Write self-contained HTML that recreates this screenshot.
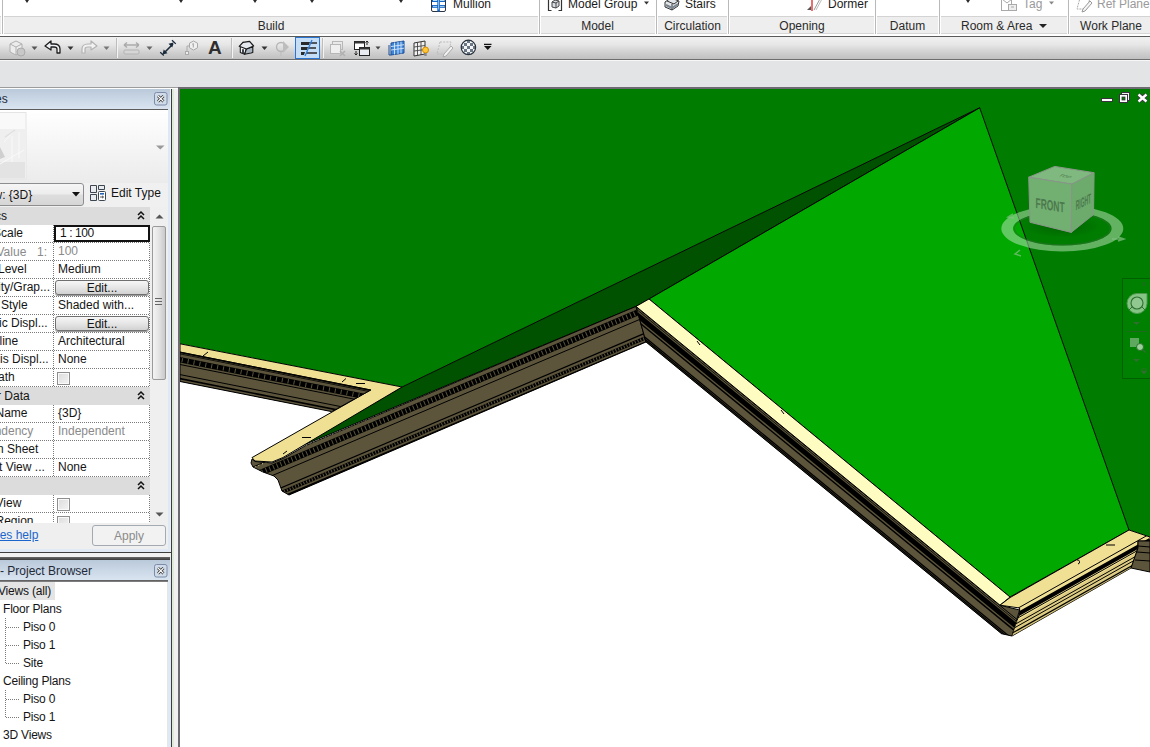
<!DOCTYPE html>
<html><head><meta charset="utf-8">
<style>
*{margin:0;padding:0;box-sizing:border-box}
html,body{width:1150px;height:747px;overflow:hidden;background:#e3e4e6;font-family:"Liberation Sans",sans-serif;font-size:12px;color:#1b1b1b}
.a{position:absolute}
.t{position:absolute;white-space:nowrap;line-height:14px}
svg{overflow:visible}
</style></head><body>
<div class="a" style="left:0;top:0;width:1150px;height:36px;background:#fff"></div>
<div class="a" style="left:-8px;top:16px;width:9px;height:18px;background:#eeeeee;border-top:1px solid #d3d3d3;border-bottom:1px solid #d6d6d6"></div>
<div class="a" style="left:4px;top:16px;width:534px;height:18px;background:#eeeeee;border-top:1px solid #d3d3d3;border-bottom:1px solid #d6d6d6"></div>
<div class="a" style="left:541px;top:16px;width:114px;height:18px;background:#eeeeee;border-top:1px solid #d3d3d3;border-bottom:1px solid #d6d6d6"></div>
<div class="a" style="left:658px;top:16px;width:69px;height:18px;background:#eeeeee;border-top:1px solid #d3d3d3;border-bottom:1px solid #d6d6d6"></div>
<div class="a" style="left:730px;top:16px;width:144px;height:18px;background:#eeeeee;border-top:1px solid #d3d3d3;border-bottom:1px solid #d6d6d6"></div>
<div class="a" style="left:877px;top:16px;width:61px;height:18px;background:#eeeeee;border-top:1px solid #d3d3d3;border-bottom:1px solid #d6d6d6"></div>
<div class="a" style="left:941px;top:16px;width:126px;height:18px;background:#eeeeee;border-top:1px solid #d3d3d3;border-bottom:1px solid #d6d6d6"></div>
<div class="a" style="left:1070px;top:16px;width:89px;height:18px;background:#eeeeee;border-top:1px solid #d3d3d3;border-bottom:1px solid #d6d6d6"></div>
<div class="a" style="left:2px;top:0;width:1px;height:34px;background:#b9b9b9"></div>
<div class="a" style="left:539px;top:0;width:1px;height:34px;background:#b9b9b9"></div>
<div class="a" style="left:656px;top:0;width:1px;height:34px;background:#b9b9b9"></div>
<div class="a" style="left:728px;top:0;width:1px;height:34px;background:#b9b9b9"></div>
<div class="a" style="left:875px;top:0;width:1px;height:34px;background:#b9b9b9"></div>
<div class="a" style="left:939px;top:0;width:1px;height:34px;background:#b9b9b9"></div>
<div class="a" style="left:1068px;top:0;width:1px;height:34px;background:#b9b9b9"></div>
<div class="a" style="left:0;top:36px;width:1150px;height:1px;background:#5a5a5a"></div>
<div class="t" style="left:211px;width:120px;text-align:center;top:19px;color:#2a2a2a">Build</div>
<div class="t" style="left:537.5px;width:120px;text-align:center;top:19px;color:#2a2a2a">Model</div>
<div class="t" style="left:632.5px;width:120px;text-align:center;top:19px;color:#2a2a2a">Circulation</div>
<div class="t" style="left:742px;width:120px;text-align:center;top:19px;color:#2a2a2a">Opening</div>
<div class="t" style="left:847.5px;width:120px;text-align:center;top:19px;color:#2a2a2a">Datum</div>
<div class="t" style="left:1051px;width:120px;text-align:center;top:19px;color:#2a2a2a">Work Plane</div>
<div class="t" style="left:961px;top:19px;color:#2a2a2a">Room &amp; Area</div>
<svg class="a" style="left:1038px;top:22px" width="10" height="8"><path d="M1 2h8l-4 4z" fill="#222"/></svg>
<svg class="a" style="left:23px;top:-3px" width="9" height="7"><path d="M0 0h8l-4 6z" fill="#2a2a2a"/></svg>
<svg class="a" style="left:177px;top:-3px" width="9" height="7"><path d="M0 0h8l-4 6z" fill="#2a2a2a"/></svg>
<svg class="a" style="left:251px;top:-3px" width="9" height="7"><path d="M0 0h8l-4 6z" fill="#2a2a2a"/></svg>
<svg class="a" style="left:308px;top:-3px" width="9" height="7"><path d="M0 0h8l-4 6z" fill="#2a2a2a"/></svg>
<svg class="a" style="left:397px;top:-3px" width="9" height="7"><path d="M0 0h8l-4 6z" fill="#2a2a2a"/></svg>
<svg class="a" style="left:964px;top:-3px" width="9" height="7"><path d="M0 0h8l-4 6z" fill="#2a2a2a"/></svg>
<svg class="a" style="left:430px;top:-4px" width="18" height="17"><rect x="1.5" y="0.5" width="14" height="15" rx="1.5" fill="#fff" stroke="#2d3440"/>
    <rect x="2" y="0" width="13" height="6" fill="#1463c6"/><rect x="3" y="1" width="4.5" height="4" fill="#b5def0"/><rect x="10" y="1" width="4.5" height="4" fill="#b5def0"/>
    <rect x="2" y="9" width="13" height="2.8" fill="#1463c6"/><rect x="3" y="9.9" width="4.5" height="1" fill="#a8d4ec"/><rect x="10" y="9.9" width="4.5" height="1" fill="#a8d4ec"/>
    <rect x="7.3" y="0" width="2.6" height="15.5" fill="#1463c6"/><rect x="8.3" y="0" width="0.8" height="13.5" fill="#b5def0"/></svg>
<div class="t" style="left:453px;top:-3px">Mullion</div>
<svg class="a" style="left:546px;top:-4px" width="18" height="16"><path d="M2.5 3v11.5h3M15.5 3v11.5h-3" fill="none" stroke="#333" stroke-width="1.2"/><path d="M6 6l3-2 4 1v5l-3 2-4-1z" fill="#d9dde3" stroke="#444"/><path d="M6 6l4 1 3-2M10 7v5" fill="none" stroke="#444"/></svg>
<div class="t" style="left:568px;top:-3px">Model Group</div>
<svg class="a" style="left:644px;top:1px" width="6" height="5"><path d="M0 0.5h5l-2.5 3z" fill="#333"/></svg>
<svg class="a" style="left:664px;top:-4px" width="16" height="15"><path d="M1 6l6-4 8 3-1 5-6 4-7-3z" fill="#e3e6ea" stroke="#333"/><path d="M3 5l7 3 4-3M8 8l0 6" stroke="#333" fill="none"/><path d="M2 9l6 3 6-4" stroke="#7a8590" fill="none" stroke-width="2"/></svg>
<div class="t" style="left:685px;top:-3px">Stairs</div>
<svg class="a" style="left:806px;top:-4px" width="16" height="16"><path d="M8 14L15 1" stroke="#999" stroke-width="1"/><path d="M10 14L16 3" stroke="#bbb" stroke-width="1"/><path d="M6 0v15" stroke="#d22" stroke-width="1.3"/><path d="M1 14l4-4v4z" fill="#555"/></svg>
<div class="t" style="left:828px;top:-3px">Dormer</div>
<svg class="a" style="left:1000px;top:-4px" width="18" height="16"><rect x="1.5" y="1.5" width="10" height="13" fill="none" stroke="#a9a9a9"/><path d="M2 3l5 4 5-4" fill="none" stroke="#a9a9a9"/><rect x="8.5" y="8.5" width="8" height="6" fill="#eee" stroke="#a9a9a9"/><path d="M11 11h3" stroke="#a9a9a9"/></svg>
<div class="t" style="left:1023px;top:-3px;color:#9a9a9a">Tag</div>
<svg class="a" style="left:1049px;top:1px" width="6" height="5"><path d="M0 0.5h5l-2.5 3z" fill="#888"/></svg>
<svg class="a" style="left:1076px;top:-4px" width="17" height="16"><path d="M4 2h10l-3 11H1z" fill="none" stroke="#aaa" stroke-dasharray="2 1"/><path d="M7 13l7-8 2 2-7 8-3 1z" fill="#f5f5f5" stroke="#999"/></svg>
<div class="t" style="left:1097px;top:-3px;color:#9a9a9a">Ref Plane</div>
<div class="a" style="left:0;top:37px;width:1150px;height:22px;background:linear-gradient(#f1f1f1,#e6e6e6 35%,#d0d0d0 70%,#c0c0c0)"></div>
<div class="a" style="left:0;top:59px;width:1150px;height:1px;background:#6e6e6e"></div>
<div class="a" style="left:0;top:60px;width:1150px;height:1px;background:#f7f7f7"></div>
<div class="a" style="left:0;top:87px;width:1150px;height:1px;background:#9c9c9c"></div>
<div class="a" style="left:0;top:88px;width:178px;height:1px;background:#fdfdfd"></div>
<svg class="a" style="left:8px;top:39px" width="18" height="18"><path d="M2 5l6-3 6 3v8l-6 3-6-3z" fill="#ececec" stroke="#b0b0b0"/><path d="M2 5l6 3 6-3M8 8v8" fill="none" stroke="#b0b0b0"/><circle cx="13" cy="13" r="4" fill="#c8c8c8" stroke="#aaa"/></svg>
<svg class="a" style="left:31px;top:46px" width="7" height="5"><path d="M0.5 0.5h6l-3 3.5z" fill="#555"/></svg>
<svg class="a" style="left:44px;top:40px" width="18" height="15"><path d="M1 6L7 1v3h3c4 0 6 2 6 5v4h-3V9c0-1.5-1-2-3-2H7v3z" fill="#eef2f6" stroke="#1e1e1e" stroke-width="1.3" stroke-linejoin="round"/></svg>
<svg class="a" style="left:67px;top:46px" width="7" height="5"><path d="M0.5 0.5h6l-3 3.5z" fill="#333"/></svg>
<svg class="a" style="left:80px;top:40px" width="18" height="15"><path d="M17 6L11 1v3H8C4 4 2 6 2 9v4h3V9c0-1.5 1-2 3-2h3v3z" fill="#f2f2f2" stroke="#b3b3b3" stroke-width="1.2" stroke-linejoin="round"/></svg>
<svg class="a" style="left:103px;top:46px" width="7" height="5"><path d="M0.5 0.5h6l-3 3.5z" fill="#777"/></svg>
<div class="a" style="left:116px;top:38px;width:1px;height:20px;background:#bdbdbd"></div><div class="a" style="left:117px;top:38px;width:1px;height:20px;background:#f4f4f4"></div>
<svg class="a" style="left:123px;top:42px" width="17" height="13"><path d="M1 3h15M1 3l3-2.5M1 3l3 2.5M16 3l-3-2.5M16 3l-3 2.5" stroke="#aaa" stroke-width="1.4" fill="none"/><rect x="1" y="8" width="15" height="4" rx="1" fill="#d6d6d6" stroke="#b3b3b3"/></svg>
<svg class="a" style="left:146px;top:46px" width="7" height="5"><path d="M0.5 0.5h6l-3 3.5z" fill="#666"/></svg>
<svg class="a" style="left:158px;top:38px" width="20" height="20"><path d="M6 15L15 6" stroke="#1a2a3a" stroke-width="1.6"/><path d="M2.2 14.3l3.6 3.1M14 2.3l3.8 3.6" stroke="#1a2a3a" stroke-width="1.3"/><path d="M4.5 16.5l1.2-5 3.8 3.8z M15.5 4.5l-1.2 5-3.8-3.8z" fill="#1a2a3a"/></svg>
<svg class="a" style="left:184px;top:40px" width="17" height="15"><path d="M9.5 1l4 2.2v4.6l-4 2.2-4-2.2V3.2z" fill="#f0f0f0" stroke="#a8a8a8"/><path d="M9.3 3.5v4M8.3 4.3l1-0.8" stroke="#999" stroke-width="0.9" fill="none"/><path d="M5.5 6H3v6" fill="none" stroke="#aaa"/><rect x="1.5" y="11.5" width="3" height="3" fill="#eee" stroke="#aaa"/></svg>
<div class="t" style="left:208px;top:38px;font-size:19px;line-height:20px;font-weight:bold;color:#2e2e2e">A</div>
<div class="a" style="left:231px;top:38px;width:1px;height:20px;background:#bdbdbd"></div><div class="a" style="left:232px;top:38px;width:1px;height:20px;background:#f4f4f4"></div>
<svg class="a" style="left:236px;top:38px" width="22" height="20"><path d="M4.3 8.3L7 4.3 9.5 8.5 10.4 11 8.6 16.3 4.3 14.4z" fill="#f4f6f8" stroke="#1a1a1a" stroke-width="1.1" stroke-linejoin="round"/><path d="M10.4 11L16.8 8.8V14.5L15 15 8.6 16.3z" fill="#a9b3be" stroke="#1a1a1a" stroke-width="1.1" stroke-linejoin="round"/><path d="M3.2 8.3L7 4.3 13.6 3.3 17.6 8 10.4 11z" fill="#e6eaee" stroke="#1a1a1a" stroke-width="1.2" stroke-linejoin="round"/><path d="M6.1 16V11.5a1 1 0 0 1 1.8 0V16z" fill="#2a2f36"/></svg>
<svg class="a" style="left:261px;top:46px" width="7" height="5"><path d="M0.5 0.5h6l-3 3.5z" fill="#333"/></svg>
<svg class="a" style="left:275px;top:40px" width="15" height="16"><circle cx="6" cy="7" r="4.5" fill="none" stroke="#b5b5b5" stroke-width="1.3"/><path d="M8 1l6 6-6 6z" fill="#bdbdbd"/><path d="M6 12v4" stroke="#bbb"/></svg>
<div class="a" style="left:295px;top:37px;width:25px;height:22px;background:#c5def6;border:1.5px solid #2a74d4"></div>
    <svg class="a" style="left:295px;top:37px" width="25" height="22"><path d="M6 5h9l-1 3H6zM6 10h7l-1 3H6zM6 15h4l-1 3H6z" fill="#2a2a2a"/><path d="M15 6h7M13 11h8M11 16h11" stroke="#2a2a2a" stroke-width="1.6"/><path d="M17 3L10 19" stroke="#2b7be0" stroke-width="1.3"/></svg>
<div class="a" style="left:322px;top:38px;width:1px;height:20px;background:#bdbdbd"></div><div class="a" style="left:323px;top:38px;width:1px;height:20px;background:#f4f4f4"></div>
<svg class="a" style="left:329px;top:40px" width="18" height="17"><rect x="3.5" y="1.5" width="10" height="8" fill="none" stroke="#b7b7b7"/><rect x="1.5" y="4.5" width="10" height="9" fill="#efefef" stroke="#b7b7b7"/><path d="M11 11l5 5M16 11l-5 5" stroke="#b0b0b0" stroke-width="1.5"/></svg>
<svg class="a" style="left:353px;top:40px" width="18" height="17"><rect x="1.5" y="1.5" width="10" height="8" fill="#fff" stroke="#222"/><rect x="1.5" y="1.5" width="10" height="2" fill="#333"/><rect x="6.5" y="7.5" width="10" height="8" fill="#e8ecf0" stroke="#222"/><rect x="6.5" y="7.5" width="10" height="2" fill="#333"/><path d="M14 1v4M12.5 2.5L14 1l1.5 1.5M3 11v4M1.5 13.5L3 15l1.5-1.5" stroke="#222" fill="none"/></svg>
<svg class="a" style="left:375px;top:46px" width="6" height="5"><path d="M0.5 0.5h5l-2.5 3z" fill="#444"/></svg>
<svg class="a" style="left:388px;top:40px" width="17" height="16"><path d="M3 3l13-2v12L3 15z" fill="#3f86d8" stroke="#1c4f95"/><path d="M6.5 2.5v12M10 2v12M13 1.5v12M3 6.5l13-1.8M3 10l13-1.8" stroke="#d8e8fa" stroke-width="0.9"/><path d="M1 5v10h2" stroke="#1c4f95" fill="none"/></svg>
<svg class="a" style="left:412px;top:40px" width="18" height="17"><path d="M2 3l11-2v13L2 16z" fill="#f2f2f2" stroke="#333"/><path d="M5.5 2.5v13M9 2v13M2 7l11-1.5M2 11l11-1.5" stroke="#444" stroke-width="0.9"/><circle cx="13.5" cy="10" r="3" fill="#ffc83a" stroke="#d48a00"/><rect x="12.3" y="13" width="2.4" height="3" fill="#888"/></svg>
<svg class="a" style="left:436px;top:40px" width="18" height="16"><path d="M4 2h11l-3 12H1z" fill="none" stroke="#bbb" stroke-dasharray="2 1.2"/><path d="M8 14l7-8 2 2-7 8-3 1z" fill="#f2f2f2" stroke="#aaa"/></svg>
<svg class="a" style="left:460px;top:39px" width="17" height="17"><defs><pattern id="chk" x="1" y="1" width="6" height="6" patternUnits="userSpaceOnUse"><rect width="6" height="6" fill="#f4f6f8"/><rect width="3" height="3" fill="#6b7785"/><rect x="3" y="3" width="3" height="3" fill="#6b7785"/></pattern></defs><circle cx="8.4" cy="8.4" r="7.2" fill="url(#chk)" stroke="#28323c" stroke-width="1.2"/></svg>
<svg class="a" style="left:483px;top:43px" width="10" height="9"><path d="M1 1.4h7.5" stroke="#111" stroke-width="1.3"/><path d="M1 3h7.5l-3.75 4z" fill="#111"/></svg>
<div class="a" style="left:167px;top:89px;width:1px;height:658px;background:#e6e6e6"></div>
<div class="a" style="left:168px;top:89px;width:3px;height:658px;background:#dfe8f5"></div>
<div class="a" style="left:171px;top:89px;width:1px;height:658px;background:#3c3c3c"></div>
<div class="a" style="left:172px;top:89px;width:2px;height:658px;background:#dfe9d7"></div>
<div class="a" style="left:174px;top:89px;width:4px;height:658px;background:#f0f0f0"></div>
<div class="a" style="left:178px;top:87px;width:2px;height:660px;background:#6d6a72"></div>
<div class="a" style="left:0;top:89px;width:170px;height:20px;background:linear-gradient(#bac9da,#d9e4f0)"></div>
<div class="a" style="left:170px;top:89px;width:1px;height:463px;background:#eaf0f8"></div>
<div class="t" style="left:-5px;top:92px;color:#1e2a38;font-size:12px">es</div>
<svg class="a" style="left:154px;top:92px" width="14" height="14"><rect x="0.5" y="0.5" width="12.5" height="12.5" rx="2" fill="#cfdbe8" stroke="#7d8ba8"/><path d="M4 4l5.5 5.5M9.5 4L4 9.5" stroke="#2a2a2a" stroke-width="2.6"/><path d="M4 4l5.5 5.5M9.5 4L4 9.5" stroke="#fff" stroke-width="1.1"/></svg>
<div class="a" style="left:0;top:109px;width:168px;height:1px;background:#5c5c5c"></div>
<div class="a" style="left:0;top:110px;width:168px;height:73px;background:linear-gradient(#ffffff,#f3f3f3 60%,#ebebeb)"></div>
<svg class="a" style="left:0;top:112px" width="28" height="68"><rect x="-2" y="0.5" width="28" height="66.5" fill="#f9f9f9" stroke="#e4e4e4"/><rect x="-1" y="17" width="26" height="33" fill="#efefef"/><rect x="-1" y="50" width="26" height="16.5" fill="#e3e3e3"/><path d="M0 35l0 12 5-2z" fill="#cfcfcf"/><path d="M0 52L24 38M4 30L15 18M12 24v26M19 20v26" stroke="#f9f9f9" stroke-width="1"/><path d="M5 25l10-7" stroke="#e0e0e0" stroke-width="1.5"/></svg>
<svg class="a" style="left:156px;top:145px" width="9" height="5"><path d="M0 0.5h8.5l-4.2 4z" fill="#9a9a9a"/></svg>
<div class="a" style="left:0;top:183px;width:168px;height:24px;background:#f0f0f0"></div>
<div class="a" style="left:-6px;top:183px;width:90px;height:23px;border:1px solid #8d8e8f;border-radius:3px;background:linear-gradient(#f6f6f6,#ececec 48%,#dedede 52%,#d6d6d6)"></div>
<div class="t" style="left:-6.5px;top:188px;color:#141414">w: {3D}</div>
<svg class="a" style="left:72px;top:192px" width="8" height="5"><path d="M0 0h8l-4 4.5z" fill="#111"/></svg>
<svg class="a" style="left:89px;top:184px" width="18" height="18"><path d="M1.5 1.5h6v7h-6zM9.5 1.5h6v4h-6zM1.5 10.5h6v6h-6z" fill="#e9ecef" stroke="#3d4650"/><rect x="9.5" y="7.5" width="7" height="9" rx="1" fill="#fff" stroke="#3d4650"/><rect x="11" y="9" width="4" height="1.6" fill="#2563b6"/><path d="M11 13h3.5M13 11.8l1.5 1.2-1.5 1.2" stroke="#333" stroke-width="0.8" fill="none"/></svg>
<div class="t" style="left:111px;top:186px;color:#141414">Edit Type</div>
<div class="a" style="left:0;top:207px;width:150px;height:316px;background:#fff"></div>
<div class="a" style="left:150px;top:207px;width:18px;height:316px;background:#efefef"></div>
<svg class="a" style="left:155px;top:214px" width="9" height="5"><path d="M0.5 4.5h8l-4-4z" fill="#555"/></svg>
<div class="a" style="left:152px;top:226px;width:14px;height:154px;border:1px solid #9a9a9a;border-radius:2px;background:linear-gradient(90deg,#f4f4f4,#e3e3e3 50%,#c9c9c9)"></div>
<svg class="a" style="left:154px;top:297px" width="9" height="9"><path d="M1 1.5h7M1 4.5h7M1 7.5h7" stroke="#666" stroke-width="1"/></svg>
<svg class="a" style="left:155px;top:512px" width="9" height="5"><path d="M0.5 0.5h8l-4 4z" fill="#555"/></svg>
<div class="a" style="left:0;top:207px;width:150px;height:18px;background:#dcdcdc"></div>
<div class="t" style="left:-5px;top:209px;color:#141414">cs</div>
<svg class="a" style="left:137px;top:211px" width="8" height="9"><path d="M1 4l3-3 3 3M1 8l3-3 3 3" fill="none" stroke="#111" stroke-width="1.5"/></svg>
<div class="a" style="left:53px;top:225px;width:1px;height:18px;background:repeating-linear-gradient(180deg,#7a7a7a 0 1px,transparent 1px 2px)"></div>
<div class="a" style="left:149px;top:225px;width:1px;height:18px;background:repeating-linear-gradient(180deg,#7a7a7a 0 1px,transparent 1px 2px)"></div>
<div class="a" style="left:0px;top:242px;width:149px;height:1px;background:repeating-linear-gradient(90deg,#7a7a7a 0 1px,transparent 1px 2px)"></div>
<div class="t" style="left:-7px;top:226px;color:#141414">Scale</div>
<div class="a" style="left:54px;top:225px;width:96px;height:17px;border:2px solid #111;background:#fff"></div>
<div class="t" style="left:60px;top:226px;color:#141414;letter-spacing:-0.4px">1 : 100</div>
<div class="a" style="left:53px;top:243px;width:1px;height:18px;background:repeating-linear-gradient(180deg,#7a7a7a 0 1px,transparent 1px 2px)"></div>
<div class="a" style="left:149px;top:243px;width:1px;height:18px;background:repeating-linear-gradient(180deg,#7a7a7a 0 1px,transparent 1px 2px)"></div>
<div class="a" style="left:0px;top:260px;width:149px;height:1px;background:repeating-linear-gradient(90deg,#7a7a7a 0 1px,transparent 1px 2px)"></div>
<div class="t" style="left:-3.5px;top:245px;color:#8a8a8a">Value</div><div class="t" style="left:37px;top:245px;color:#8a8a8a">1:</div>
<div class="t" style="left:58px;top:244px;color:#8a8a8a">100</div>
<div class="a" style="left:53px;top:261px;width:1px;height:18px;background:repeating-linear-gradient(180deg,#7a7a7a 0 1px,transparent 1px 2px)"></div>
<div class="a" style="left:149px;top:261px;width:1px;height:18px;background:repeating-linear-gradient(180deg,#7a7a7a 0 1px,transparent 1px 2px)"></div>
<div class="a" style="left:0px;top:278px;width:149px;height:1px;background:repeating-linear-gradient(90deg,#7a7a7a 0 1px,transparent 1px 2px)"></div>
<div class="t" style="left:-2px;top:262px;color:#141414">Level</div>
<div class="t" style="left:58px;top:262px;color:#141414">Medium</div>
<div class="a" style="left:53px;top:279px;width:1px;height:18px;background:repeating-linear-gradient(180deg,#7a7a7a 0 1px,transparent 1px 2px)"></div>
<div class="a" style="left:149px;top:279px;width:1px;height:18px;background:repeating-linear-gradient(180deg,#7a7a7a 0 1px,transparent 1px 2px)"></div>
<div class="a" style="left:0px;top:296px;width:149px;height:1px;background:repeating-linear-gradient(90deg,#7a7a7a 0 1px,transparent 1px 2px)"></div>
<div class="t" style="left:-2px;top:280px;color:#141414">ity/Grap...</div>
<div class="a" style="left:55px;top:280px;width:94px;height:15px;border:1px solid #6f6f6f;border-radius:3px;background:linear-gradient(#f6f6f6,#e6e6e6 50%,#d2d2d2);box-shadow:0 1px 0 #9a9a9a"></div>
<div class="t" style="left:55px;width:94px;text-align:center;top:281px;color:#141414">Edit...</div>
<div class="a" style="left:53px;top:297px;width:1px;height:18px;background:repeating-linear-gradient(180deg,#7a7a7a 0 1px,transparent 1px 2px)"></div>
<div class="a" style="left:149px;top:297px;width:1px;height:18px;background:repeating-linear-gradient(180deg,#7a7a7a 0 1px,transparent 1px 2px)"></div>
<div class="a" style="left:0px;top:314px;width:149px;height:1px;background:repeating-linear-gradient(90deg,#7a7a7a 0 1px,transparent 1px 2px)"></div>
<div class="t" style="left:1px;top:298px;color:#141414">Style</div>
<div class="t" style="left:58px;top:298px;color:#141414">Shaded with...</div>
<div class="a" style="left:53px;top:315px;width:1px;height:18px;background:repeating-linear-gradient(180deg,#7a7a7a 0 1px,transparent 1px 2px)"></div>
<div class="a" style="left:149px;top:315px;width:1px;height:18px;background:repeating-linear-gradient(180deg,#7a7a7a 0 1px,transparent 1px 2px)"></div>
<div class="a" style="left:0px;top:332px;width:149px;height:1px;background:repeating-linear-gradient(90deg,#7a7a7a 0 1px,transparent 1px 2px)"></div>
<div class="t" style="left:-1px;top:316px;color:#141414">ic Displ...</div>
<div class="a" style="left:55px;top:316px;width:94px;height:15px;border:1px solid #6f6f6f;border-radius:3px;background:linear-gradient(#f6f6f6,#e6e6e6 50%,#d2d2d2);box-shadow:0 1px 0 #9a9a9a"></div>
<div class="t" style="left:55px;width:94px;text-align:center;top:317px;color:#141414">Edit...</div>
<div class="a" style="left:53px;top:333px;width:1px;height:18px;background:repeating-linear-gradient(180deg,#7a7a7a 0 1px,transparent 1px 2px)"></div>
<div class="a" style="left:149px;top:333px;width:1px;height:18px;background:repeating-linear-gradient(180deg,#7a7a7a 0 1px,transparent 1px 2px)"></div>
<div class="a" style="left:0px;top:350px;width:149px;height:1px;background:repeating-linear-gradient(90deg,#7a7a7a 0 1px,transparent 1px 2px)"></div>
<div class="t" style="left:-0.5px;top:334px;color:#141414">line</div>
<div class="t" style="left:58px;top:334px;color:#141414">Architectural</div>
<div class="a" style="left:53px;top:351px;width:1px;height:18px;background:repeating-linear-gradient(180deg,#7a7a7a 0 1px,transparent 1px 2px)"></div>
<div class="a" style="left:149px;top:351px;width:1px;height:18px;background:repeating-linear-gradient(180deg,#7a7a7a 0 1px,transparent 1px 2px)"></div>
<div class="a" style="left:0px;top:368px;width:149px;height:1px;background:repeating-linear-gradient(90deg,#7a7a7a 0 1px,transparent 1px 2px)"></div>
<div class="t" style="left:-12px;top:352px;color:#141414">ysis Displ...</div>
<div class="t" style="left:58px;top:352px;color:#141414">None</div>
<div class="a" style="left:53px;top:369px;width:1px;height:18px;background:repeating-linear-gradient(180deg,#7a7a7a 0 1px,transparent 1px 2px)"></div>
<div class="a" style="left:149px;top:369px;width:1px;height:18px;background:repeating-linear-gradient(180deg,#7a7a7a 0 1px,transparent 1px 2px)"></div>
<div class="a" style="left:0px;top:386px;width:149px;height:1px;background:repeating-linear-gradient(90deg,#7a7a7a 0 1px,transparent 1px 2px)"></div>
<div class="t" style="left:-2px;top:370px;color:#141414">ath</div>
<div class="a" style="left:57px;top:372px;width:13px;height:13px;border:1px solid #8e8f8f;background:linear-gradient(135deg,#dcdcdc,#f4f4f4)"></div>
<div class="a" style="left:58px;top:373px;width:11px;height:11px;border:1px solid #fafafa"></div>
<div class="a" style="left:0;top:387px;width:150px;height:18px;background:#dcdcdc"></div>
<div class="t" style="left:-3px;top:389px;color:#141414">r Data</div>
<svg class="a" style="left:137px;top:391px" width="8" height="9"><path d="M1 4l3-3 3 3M1 8l3-3 3 3" fill="none" stroke="#111" stroke-width="1.5"/></svg>
<div class="a" style="left:53px;top:405px;width:1px;height:18px;background:repeating-linear-gradient(180deg,#7a7a7a 0 1px,transparent 1px 2px)"></div>
<div class="a" style="left:149px;top:405px;width:1px;height:18px;background:repeating-linear-gradient(180deg,#7a7a7a 0 1px,transparent 1px 2px)"></div>
<div class="a" style="left:0px;top:422px;width:149px;height:1px;background:repeating-linear-gradient(90deg,#7a7a7a 0 1px,transparent 1px 2px)"></div>
<div class="t" style="left:-4.5px;top:406px;color:#141414">Name</div>
<div class="t" style="left:58px;top:406px;color:#141414">{3D}</div>
<div class="a" style="left:53px;top:423px;width:1px;height:18px;background:repeating-linear-gradient(180deg,#7a7a7a 0 1px,transparent 1px 2px)"></div>
<div class="a" style="left:149px;top:423px;width:1px;height:18px;background:repeating-linear-gradient(180deg,#7a7a7a 0 1px,transparent 1px 2px)"></div>
<div class="a" style="left:0px;top:440px;width:149px;height:1px;background:repeating-linear-gradient(90deg,#7a7a7a 0 1px,transparent 1px 2px)"></div>
<div class="t" style="left:-12px;top:424px;color:#8a8a8a">endency</div>
<div class="t" style="left:58px;top:424px;color:#8a8a8a">Independent</div>
<div class="a" style="left:53px;top:441px;width:1px;height:18px;background:repeating-linear-gradient(180deg,#7a7a7a 0 1px,transparent 1px 2px)"></div>
<div class="a" style="left:149px;top:441px;width:1px;height:18px;background:repeating-linear-gradient(180deg,#7a7a7a 0 1px,transparent 1px 2px)"></div>
<div class="a" style="left:0px;top:458px;width:149px;height:1px;background:repeating-linear-gradient(90deg,#7a7a7a 0 1px,transparent 1px 2px)"></div>
<div class="t" style="left:-3px;top:442px;color:#141414">n Sheet</div>
<div class="a" style="left:53px;top:459px;width:1px;height:18px;background:repeating-linear-gradient(180deg,#7a7a7a 0 1px,transparent 1px 2px)"></div>
<div class="a" style="left:149px;top:459px;width:1px;height:18px;background:repeating-linear-gradient(180deg,#7a7a7a 0 1px,transparent 1px 2px)"></div>
<div class="a" style="left:0px;top:476px;width:149px;height:1px;background:repeating-linear-gradient(90deg,#7a7a7a 0 1px,transparent 1px 2px)"></div>
<div class="t" style="left:-1px;top:460px;color:#141414">t View ...</div>
<div class="t" style="left:58px;top:460px;color:#141414">None</div>
<div class="a" style="left:0;top:477px;width:150px;height:18px;background:#dcdcdc"></div>
<svg class="a" style="left:137px;top:481px" width="8" height="9"><path d="M1 4l3-3 3 3M1 8l3-3 3 3" fill="none" stroke="#111" stroke-width="1.5"/></svg>
<div class="a" style="left:53px;top:495px;width:1px;height:18px;background:repeating-linear-gradient(180deg,#7a7a7a 0 1px,transparent 1px 2px)"></div>
<div class="a" style="left:149px;top:495px;width:1px;height:18px;background:repeating-linear-gradient(180deg,#7a7a7a 0 1px,transparent 1px 2px)"></div>
<div class="a" style="left:0px;top:512px;width:149px;height:1px;background:repeating-linear-gradient(90deg,#7a7a7a 0 1px,transparent 1px 2px)"></div>
<div class="t" style="left:-4.5px;top:496px;color:#141414">View</div>
<div class="a" style="left:57px;top:498px;width:13px;height:13px;border:1px solid #8e8f8f;background:linear-gradient(135deg,#dcdcdc,#f4f4f4)"></div>
<div class="a" style="left:58px;top:499px;width:11px;height:11px;border:1px solid #fafafa"></div>
<div class="a" style="left:53px;top:513px;width:1px;height:18px;background:repeating-linear-gradient(180deg,#7a7a7a 0 1px,transparent 1px 2px)"></div>
<div class="a" style="left:149px;top:513px;width:1px;height:18px;background:repeating-linear-gradient(180deg,#7a7a7a 0 1px,transparent 1px 2px)"></div>
<div class="a" style="left:0px;top:530px;width:149px;height:1px;background:repeating-linear-gradient(90deg,#7a7a7a 0 1px,transparent 1px 2px)"></div>
<div class="t" style="left:-4.5px;top:514px;color:#141414">Region</div>
<div class="a" style="left:57px;top:516px;width:13px;height:13px;border:1px solid #8e8f8f;background:linear-gradient(135deg,#dcdcdc,#f4f4f4)"></div>
<div class="a" style="left:58px;top:517px;width:11px;height:11px;border:1px solid #fafafa"></div>
<div class="a" style="left:0;top:523px;width:168px;height:26px;background:#efefef"></div>
<div class="t" style="left:-3px;top:528px;color:#1a66cc;text-decoration:underline">ies help</div>
<div class="a" style="left:92px;top:525px;width:74px;height:21px;border:1px solid #a3aab2;border-radius:3px;background:#f2f2f2"></div>
<div class="t" style="left:92px;width:74px;text-align:center;top:529px;color:#8b8b8b">Apply</div>
<div class="a" style="left:0;top:549px;width:170px;height:3px;background:#e2eaf5"></div>
<div class="a" style="left:0;top:552px;width:171px;height:1px;background:#3f3f3f"></div>
<div class="a" style="left:0;top:553px;width:171px;height:4px;background:#f2f2f2"></div>
<div class="a" style="left:0;top:557px;width:170px;height:3px;background:linear-gradient(#6a6a6a,#3a3a3a)"></div>
<div class="a" style="left:0;top:560px;width:170px;height:20px;background:linear-gradient(#bac9da,#d9e4f0)"></div>
<div class="t" style="left:0;top:564px;color:#1e2a38;font-size:12px">- Project Browser</div>
<svg class="a" style="left:154px;top:564px" width="14" height="14"><rect x="0.5" y="0.5" width="12.5" height="12.5" rx="2" fill="#cfdbe8" stroke="#7d8ba8"/><path d="M4 4l5.5 5.5M9.5 4L4 9.5" stroke="#2a2a2a" stroke-width="2.6"/><path d="M4 4l5.5 5.5M9.5 4L4 9.5" stroke="#fff" stroke-width="1.1"/></svg>
<div class="a" style="left:0;top:580px;width:168px;height:2px;background:linear-gradient(#555,#8a8a8a)"></div>
<div class="a" style="left:0;top:582px;width:167px;height:165px;background:#fff"></div>
<div class="a" style="left:0;top:582px;width:55px;height:18px;background:#e4e4e4"></div>
<div class="t" style="left:-2px;top:584px;color:#141414;letter-spacing:-0.2px">Views (all)</div>
<div class="t" style="left:3px;top:602px;color:#141414;letter-spacing:-0.2px">Floor Plans</div>
<div class="t" style="left:23px;top:620px;color:#141414;letter-spacing:-0.2px">Piso 0</div>
<div class="t" style="left:23px;top:638px;color:#141414;letter-spacing:-0.2px">Piso 1</div>
<div class="t" style="left:23px;top:656px;color:#141414;letter-spacing:-0.2px">Site</div>
<div class="t" style="left:3px;top:674px;color:#141414;letter-spacing:-0.2px">Ceiling Plans</div>
<div class="t" style="left:23px;top:692px;color:#141414;letter-spacing:-0.2px">Piso 0</div>
<div class="t" style="left:23px;top:710px;color:#141414;letter-spacing:-0.2px">Piso 1</div>
<div class="t" style="left:3px;top:728px;color:#141414;letter-spacing:-0.2px">3D Views</div>
<div class="a" style="left:5px;top:618px;width:1px;height:45px;background:repeating-linear-gradient(180deg,#7a7a7a 0 1px,transparent 1px 2px)"></div>
<div class="a" style="left:5px;top:690px;width:1px;height:27px;background:repeating-linear-gradient(180deg,#7a7a7a 0 1px,transparent 1px 2px)"></div>
<div class="a" style="left:6px;top:627px;width:14px;height:1px;background:repeating-linear-gradient(90deg,#7a7a7a 0 1px,transparent 1px 2px)"></div>
<div class="a" style="left:6px;top:645px;width:14px;height:1px;background:repeating-linear-gradient(90deg,#7a7a7a 0 1px,transparent 1px 2px)"></div>
<div class="a" style="left:6px;top:663px;width:14px;height:1px;background:repeating-linear-gradient(90deg,#7a7a7a 0 1px,transparent 1px 2px)"></div>
<div class="a" style="left:6px;top:699px;width:14px;height:1px;background:repeating-linear-gradient(90deg,#7a7a7a 0 1px,transparent 1px 2px)"></div>
<div class="a" style="left:6px;top:717px;width:14px;height:1px;background:repeating-linear-gradient(90deg,#7a7a7a 0 1px,transparent 1px 2px)"></div>
<svg class="a" style="left:0;top:0" width="1150" height="747" viewBox="0 0 1150 747">
<defs><clipPath id="vp"><rect x="180" y="89" width="970" height="658"/></clipPath>
<clipPath id="cg1"><polygon points="180.0,352.1 370.7,390.0 331.6,411.6 180.0,381.5"/></clipPath>
<clipPath id="cg2"><polygon points="252.0,459.0 255.0,461.5 272.0,463.0 284.0,458.0 305.7,445.5 636.0,306.4 646.0,342.0 289.0,495.0 282.0,491.0 278.0,480.0 274.0,476.0 263.0,472.0 253.0,467.0 251.0,463.0"/></clipPath>
<clipPath id="cg3"><polygon points="636.0,306.4 1000.0,605.2 1019.6,610.0 1012.0,636.0 1001.5,633.7 646.0,342.0"/></clipPath>
</defs>
<rect x="178" y="87" width="972" height="2" fill="#6d6a72"/>
<g clip-path="url(#vp)">
<rect x="180" y="89" width="970" height="658" fill="#fff"/>
<polygon points="180.0,89.0 1150.0,89.0 1150.0,537.0 1129.0,530.0 979.7,107.8 402.0,387.0 180.0,343.8" fill="#007d00"/>
<polygon points="402.0,387.0 979.7,107.8 649.0,299.0 636.0,306.4 305.7,444.2 290.0,452.0" fill="#005200" stroke="#000" stroke-width="1"/>
<polygon points="979.7,107.8 1129.0,530.0 1010.0,597.0 649.0,299.0" fill="#00a800" stroke="#000" stroke-width="1"/>
<polygon points="180.0,343.8 402.0,387.0 283.0,457.5 272.0,462.0 255.0,461.0 252.0,457.6 370.7,390.0 180.0,352.1" fill="#f0e094" stroke="#000" stroke-width="1"/>
<polygon points="180.0,352.1 370.7,390.0 331.6,411.6 180.0,381.5" fill="#5c553c" stroke="#000" stroke-width="1"/>
<polygon points="252.0,459.0 255.0,461.5 272.0,463.0 284.0,458.0 305.7,445.5 636.0,306.4 646.0,342.0 289.0,495.0 282.0,491.0 278.0,480.0 274.0,476.0 263.0,472.0 253.0,467.0 251.0,463.0" fill="#5c553c" stroke="#000" stroke-width="1"/>
<polygon points="636.0,306.4 1000.0,605.2 1019.6,610.0 1012.0,636.0 1001.5,633.7 646.0,342.0" fill="#5c553c" stroke="#000" stroke-width="1"/>
<g clip-path="url(#cg1)">
<line x1="170" y1="350.61" x2="400" y2="396.38" stroke="#000" stroke-width="1" />
<line x1="170" y1="351.91" x2="400" y2="397.68" stroke="#000" stroke-width="0.8" />
<line x1="170" y1="357.81" x2="400" y2="403.58" stroke="#000" stroke-width="5.4" />
<line x1="170" y1="362.51" x2="400" y2="408.28" stroke="#000" stroke-width="1" />
<line x1="170" y1="372.61" x2="400" y2="418.38" stroke="#000" stroke-width="1" />
<line x1="170" y1="376.61" x2="400" y2="422.38" stroke="#000" stroke-width="1.6" />
<line x1="170" y1="379.81" x2="400" y2="425.58" stroke="#000" stroke-width="1.2" />
</g>
<g clip-path="url(#cg1)">
<line x1="170" y1="357.81" x2="400" y2="403.58" stroke="#5c553c" stroke-width="4.5" stroke-dasharray="1 5"/>
</g>
<g clip-path="url(#cg2)">
<line x1="240" y1="472.50" x2="660" y2="294.00" stroke="#000" stroke-width="1" />
<line x1="240" y1="481.50" x2="660" y2="303.00" stroke="#000" stroke-width="6" />
<line x1="240" y1="489.30" x2="660" y2="310.80" stroke="#000" stroke-width="1" />
<line x1="240" y1="505.30" x2="660" y2="326.80" stroke="#000" stroke-width="1.2" />
<line x1="240" y1="510.20" x2="660" y2="331.70" stroke="#000" stroke-width="3.5" />
<line x1="240" y1="515.00" x2="660" y2="336.50" stroke="#000" stroke-width="2" />
<line x1="240" y1="516.70" x2="660" y2="338.20" stroke="#000" stroke-width="1" />
</g>
<g clip-path="url(#cg2)">
<line x1="240" y1="481.50" x2="660" y2="303.00" stroke="#5c553c" stroke-width="5" stroke-dasharray="1 3"/>
<line x1="240" y1="473.30" x2="660" y2="294.80" stroke="#e8dca0" stroke-width="1" stroke-dasharray="1 3"/>
<line x1="240" y1="510.20" x2="660" y2="331.70" stroke="#5c553c" stroke-width="3" stroke-dasharray="1 2"/>
</g>
<g clip-path="url(#cg3)">
<line x1="620" y1="293.56" x2="1030" y2="630.17" stroke="#000" stroke-width="1" />
<line x1="620" y1="295.76" x2="1030" y2="632.37" stroke="#000" stroke-width="0.8" />
<line x1="620" y1="300.76" x2="1030" y2="637.37" stroke="#000" stroke-width="5" />
<line x1="620" y1="306.76" x2="1030" y2="643.37" stroke="#000" stroke-width="1.4" />
<line x1="620" y1="316.76" x2="1030" y2="653.37" stroke="#000" stroke-width="1.3" />
<line x1="620" y1="318.76" x2="1030" y2="655.37" stroke="#000" stroke-width="1.2" />
<line x1="620" y1="320.26" x2="1030" y2="656.87" stroke="#000" stroke-width="1" />
</g>
<polygon points="636.0,306.4 649.0,299.0 1010.0,597.0 1000.0,605.2" fill="#fffcc2" stroke="#000" stroke-width="1"/>
<clipPath id="cg4"><polygon points="1010.0,597.6 1129.0,530.0 1150.0,537.0 1150.0,541.0 1138.0,541.0 1138.0,548.0 1131.0,568.0 1012.0,636.0 1019.6,613.0 1019.6,608.0 1000.0,605.2"/></clipPath>
<polygon points="1010.0,597.6 1129.0,530.0 1150.0,537.0 1150.0,541.0 1138.0,541.0 1138.0,548.0 1131.0,568.0 1012.0,636.0 1019.6,613.0 1019.6,608.0 1000.0,605.2" fill="#f0e094" stroke="#000" stroke-width="1"/>
<g clip-path="url(#cg4)">
<polygon points="1000,630 1150,545 1150,575 1000,660" fill="#cdbb72" fill-opacity="0.55"/>
</g>
<g clip-path="url(#cg4)">
<line x1="990" y1="623.91" x2="1150" y2="533.83" stroke="#000" stroke-width="1" />
<line x1="990" y1="630.01" x2="1150" y2="539.93" stroke="#000" stroke-width="4" />
<line x1="990" y1="633.61" x2="1150" y2="543.53" stroke="#000" stroke-width="1" />
<line x1="990" y1="638.41" x2="1150" y2="548.33" stroke="#000" stroke-width="1" />
<line x1="990" y1="641.61" x2="1150" y2="551.53" stroke="#000" stroke-width="1" />
<line x1="990" y1="645.61" x2="1150" y2="555.53" stroke="#000" stroke-width="1.2" />
</g>
<polygon points="1138.0,541.0 1150.0,541.0 1150.0,572.0 1131.0,568.0 1138.0,548.0" fill="#5c553c" stroke="#000" stroke-width="1"/>
<path d="M1138 546l12 1M1137 552l13 1M1135 560l15 1" stroke="#000" stroke-width="1.2"/>
<path d="M203 356l5-4M342 382l4-3.5M356 383.5h9M302 437.5h9M283 454l4-3M697 341l3 4M781 410l3 4M1106 545h9M1077 560a2 2 0 1 1 1 4" fill="none" stroke="#000" stroke-width="1"/>
</g>
<rect x="1101.5" y="98.5" width="11" height="3" fill="#fff" stroke="#3a3340" stroke-width="1"/>
<rect x="1121.5" y="92.5" width="8" height="8" fill="#f4f4f4" stroke="#3a3340" stroke-width="1"/>
<rect x="1119.5" y="94.5" width="8" height="8" fill="#fff" stroke="#3a3340" stroke-width="1"/>
<rect x="1122" y="97" width="3" height="3" fill="#007d00" stroke="#3a3340" stroke-width="0.8"/>
<path d="M1138.5 94.5l8 7M1146.5 94.5l-8 7" stroke="#3a3340" stroke-width="4.2"/>
<path d="M1138.5 94.5l8 7M1146.5 94.5l-8 7" stroke="#fff" stroke-width="2.4"/>
</svg>
<svg class="a" style="left:0;top:0" width="1150" height="747" viewBox="0 0 1150 747">
<defs><radialGradient id="shd" cx="0.5" cy="0.5" r="0.5"><stop offset="0" stop-color="#004d00" stop-opacity="0.55"/><stop offset="1" stop-color="#004d00" stop-opacity="0"/></radialGradient></defs>
<path fill-rule="evenodd" d="M1001.3 228.6a61 23 0 1 0 122 0a61 23 0 1 0 -122 0zM1013 228.6a49.3 17 0 1 0 98.6 0a49.3 17 0 1 0 -98.6 0z" fill="#c4e8c4" fill-opacity="0.5"/>
<ellipse cx="1062.3" cy="228.6" rx="48" ry="16.3" fill="none" stroke="#2f6f2f" stroke-opacity="0.6" stroke-width="1.2"/>
<ellipse cx="1062" cy="226" rx="40" ry="12" fill="url(#shd)"/>
<polygon points="1028.7,177.2 1054.7,166.4 1094.1,172.7 1071.9,184.1" fill="#7fb97f" stroke="#8a958a" stroke-width="1"/>
<polygon points="1028.7,177.2 1071.9,184.1 1071.2,232.4 1030,222.3" fill="#72b072" stroke="#8a958a" stroke-width="1"/>
<polygon points="1071.9,184.1 1094.1,172.7 1093.5,214.6 1071.2,232.4" fill="#6cab6c" stroke="#8a958a" stroke-width="1"/>
<text transform="matrix(0.65 0.104 0 1.12 1035.5 208)" x="0" y="0" font-family="Liberation Sans" font-weight="bold" font-size="13" fill="#4d784d">FRONT</text>
<text transform="matrix(0.38 -0.194 0 1.07 1075.7 210.5)" x="0" y="0" font-family="Liberation Sans" font-weight="bold" font-size="13" fill="#4d784d">RIGHT</text>
<text transform="matrix(0.55 0.12 -0.5 0.3 1058 176)" x="0" y="0" font-family="Liberation Sans" font-weight="bold" font-size="10" fill="#5a8a5a">TOP</text>
<path d="M1013 214l-5 3 6 1" fill="none" stroke="#88c088" stroke-width="1.5" stroke-opacity="0.7"/>
<path d="M1118 237l6 2-6 2M1112 239h10" fill="none" stroke="#88c088" stroke-width="1.5" stroke-opacity="0.7"/>
<path d="M1020 250l-5 4 6 2" fill="none" stroke="#88c088" stroke-width="1.5" stroke-opacity="0.7"/>
<rect x="1122.5" y="278.5" width="30" height="100" fill="#008000" stroke="#006000" stroke-width="1"/>
<path d="M1142 282l4 4M1146 282l-4 4" stroke="#1f6a1f" stroke-width="1"/>
<path d="M1137 293.5h9.5a0.5 0.5 0 0 1 0.5 0.5v9.5a10 10 0 1 1 -10 -10z" fill="#86c486" stroke="#4f9a4f"/>
<circle cx="1137" cy="303" r="6" fill="#90c890" stroke="#2f6f2f" stroke-width="1.1"/>
<path d="M1129 310l3-3M1145 310l-3-3" stroke="#2f6f2f"/>
<path d="M1133 322h7l-3.5 3z" fill="#2f6f2f"/>
<path d="M1127 331.5h20" stroke="#1f6a1f"/>
<rect x="1130" y="338" width="9" height="9" fill="#5fa85f"/>
<circle cx="1140" cy="347" r="3.5" fill="#9ad09a" stroke="#2f6f2f"/>
<path d="M1142.5 349.5l3 3" stroke="#2f6f2f" stroke-width="1.2"/>
<path d="M1133 359h7l-3.5 3z" fill="#2f6f2f"/>
<path d="M1141 369h6M1141 371h6l-3 3z" fill="#2f6f2f" stroke="#2f6f2f" stroke-width="0.8"/>
</svg>
</body></html>
